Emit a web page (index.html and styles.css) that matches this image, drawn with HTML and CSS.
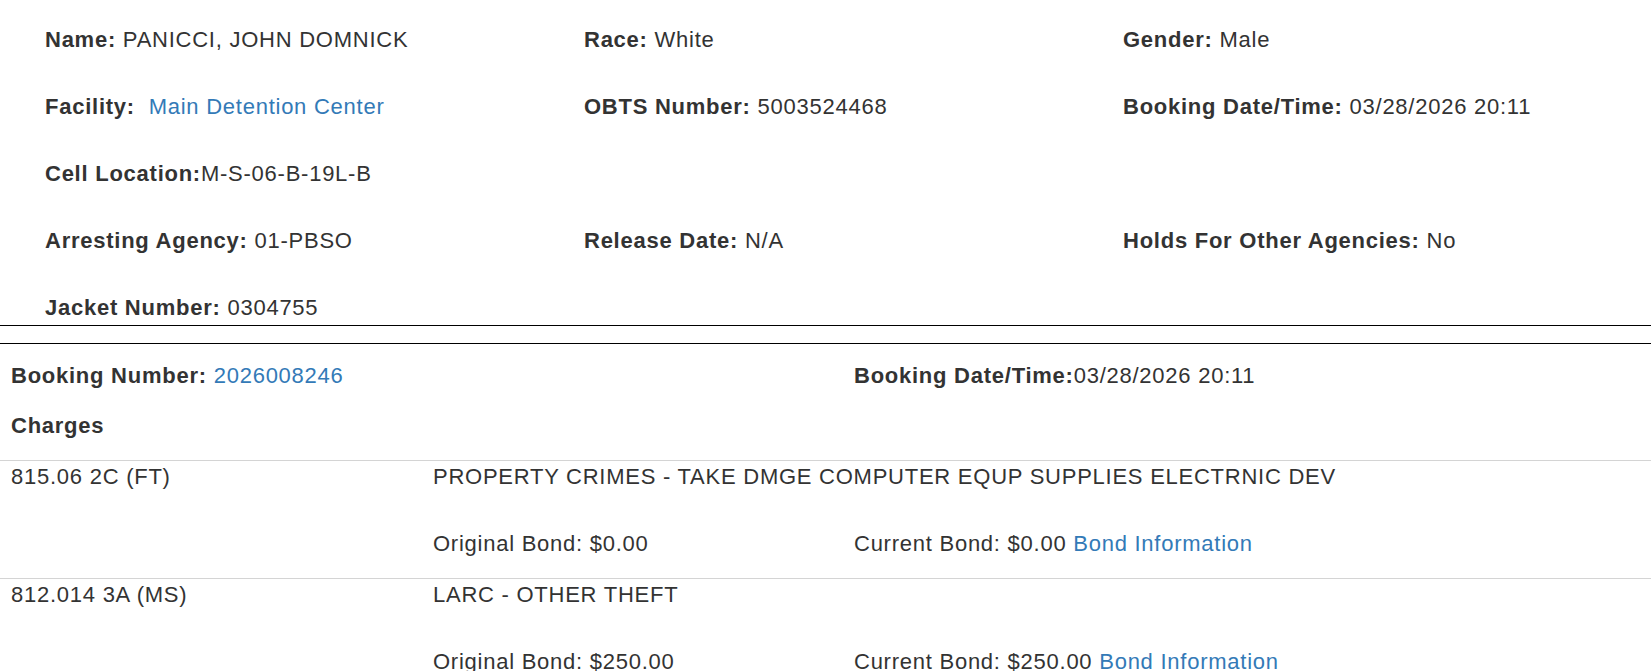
FILE: index.html
```html
<!DOCTYPE html>
<html>
<head>
<meta charset="utf-8">
<link rel="stylesheet" href="styles.css">
</head>
<body>
<div class="details">
  <div class="item"><b>Name:</b> PANICCI, JOHN DOMNICK</div>
  <div class="item"><b>Race:</b> White</div>
  <div class="item"><b>Gender:</b> Male</div>

  <div class="item"><b>Facility:</b>&nbsp; <a href="#">Main Detention Center</a></div>
  <div class="item"><b>OBTS Number:</b> 5003524468</div>
  <div class="item"><b>Booking Date/Time:</b> 03/28/2026 20:11</div>

  <div class="item"><b>Cell Location:</b>M-S-06-B-19L-B</div>
  <div class="item"></div>
  <div class="item"></div>

  <div class="item"><b>Arresting Agency:</b> 01-PBSO</div>
  <div class="item"><b>Release Date:</b> N/A</div>
  <div class="item"><b>Holds For Other Agencies:</b> No</div>

  <div class="item"><b>Jacket Number:</b> 0304755</div>
</div>
<div class="divider"></div>
<div class="booking">
  <div class="booking-head">
    <div class="cell"><b>Booking Number:</b> <a href="#">2026008246</a></div>
    <div class="cell"></div>
    <div class="cell"><b>Booking Date/Time:</b>03/28/2026 20:11</div>
  </div>
  <div class="charges-title"><b>Charges</b></div>
  <div class="charge">
    <div class="cell">815.06 2C (FT)</div>
    <div class="cell span2">PROPERTY CRIMES - TAKE DMGE COMPUTER EQUP SUPPLIES ELECTRNIC DEV</div>
    <div class="cell"></div>
    <div class="cell">Original Bond: $0.00</div>
    <div class="cell">Current Bond: $0.00 <a href="#">Bond Information</a></div>
  </div>
  <div class="charge">
    <div class="cell">812.014 3A (MS)</div>
    <div class="cell span2">LARC - OTHER THEFT</div>
    <div class="cell"></div>
    <div class="cell">Original Bond: $250.00</div>
    <div class="cell">Current Bond: $250.00 <a href="#">Bond Information</a></div>
  </div>
</div>
</body>
</html>
```
FILE: styles.css
```css
html, body {
  margin: 0;
  padding: 0;
  background: #fff;
}
body {
  font-family: "Liberation Sans", Arial, sans-serif;
  font-size: 22px;
  letter-spacing: 0.75px;
  line-height: 28px;
  color: #333;
}
a {
  color: #337ab7;
  text-decoration: none;
}
b {
  font-weight: bold;
}
.details {
  display: grid;
  grid-template-columns: 539px 539px 1fr;
  row-gap: 39px;
  padding: 26px 0 3px 45px;
}
.item {
  min-height: 28px;
  white-space: nowrap;
}
.divider {
  border-top: 1px solid #000;
  border-bottom: 1px solid #000;
  height: 17px;
}
.booking-head,
.charge {
  display: grid;
  grid-template-columns: 422px 421px 1fr;
  padding-left: 11px;
}
.booking-head {
  padding-top: 18px;
}
.charges-title {
  padding: 22px 0 20px 11px;
}
.charge {
  border-top: 1px solid #d4d4d4;
  padding-top: 2px;
  padding-bottom: 20px;
  row-gap: 39px;
}
.cell {
  min-height: 28px;
  white-space: nowrap;
}
.span2 {
  grid-column: span 2;
}
```
